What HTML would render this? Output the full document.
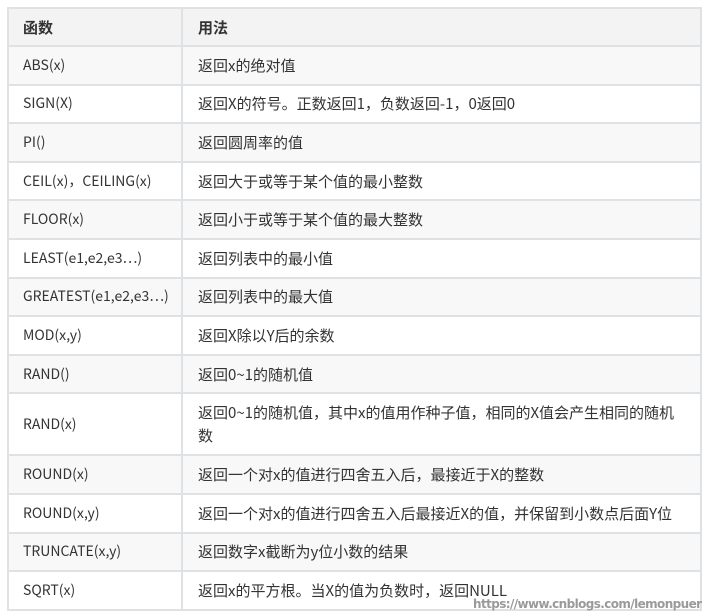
<!DOCTYPE html>
<html><head><meta charset="utf-8"><style>
html,body{margin:0;padding:0;background:#fff;width:708px;height:616px;overflow:hidden;position:relative}
table{position:absolute;left:7px;top:7px;width:695px;border-collapse:collapse;font-family:"Noto Sans CJK SC","Liberation Sans",sans-serif;font-size:15px;color:#333}
td,th{border:2px solid #dfe2e5;padding:0 0 0 15px;height:36.6px;text-align:left;vertical-align:middle;line-height:23px}
th{background:#f3f3f3;font-weight:bold;height:36px}
tr:nth-child(even) td{background:#f8f8f8}
td:first-child,th:first-child{width:158px;padding-left:14px}
td:first-child{font-size:14px}
.wm{position:absolute;left:473px;top:597px;font-family:"DejaVu Sans",sans-serif;font-size:12px;color:#9a9a9a;font-weight:bold;letter-spacing:-0.6px;white-space:nowrap}
</style></head><body>
<table>
<tr><th>函数</th><th>用法</th></tr>
<tr><td>ABS(x)</td><td>返回x的绝对值</td></tr>
<tr><td>SIGN(X)</td><td>返回X的符号。正数返回1，负数返回-1，0返回0</td></tr>
<tr><td>PI()</td><td>返回圆周率的值</td></tr>
<tr><td>CEIL(x)，CEILING(x)</td><td>返回大于或等于某个值的最小整数</td></tr>
<tr><td>FLOOR(x)</td><td>返回小于或等于某个值的最大整数</td></tr>
<tr><td>LEAST(e1,e2,e3…)</td><td>返回列表中的最小值</td></tr>
<tr><td>GREATEST(e1,e2,e3…)</td><td>返回列表中的最大值</td></tr>
<tr><td>MOD(x,y)</td><td>返回X除以Y后的余数</td></tr>
<tr><td>RAND()</td><td>返回0~1的随机值</td></tr>
<tr><td style="height:60px">RAND(x)</td><td style="padding-right:12px">返回0~1的随机值，其中x的值用作种子值，相同的X值会产生相同的随机数</td></tr>
<tr><td>ROUND(x)</td><td>返回一个对x的值进行四舍五入后，最接近于X的整数</td></tr>
<tr><td>ROUND(x,y)</td><td>返回一个对x的值进行四舍五入后最接近X的值，并保留到小数点后面Y位</td></tr>
<tr><td>TRUNCATE(x,y)</td><td>返回数字x截断为y位小数的结果</td></tr>
<tr><td>SQRT(x)</td><td>返回x的平方根。当X的值为负数时，返回NULL</td></tr>
</table>
<div class="wm">https://www.cnblogs.com/lemonpuer</div>
</body></html>
